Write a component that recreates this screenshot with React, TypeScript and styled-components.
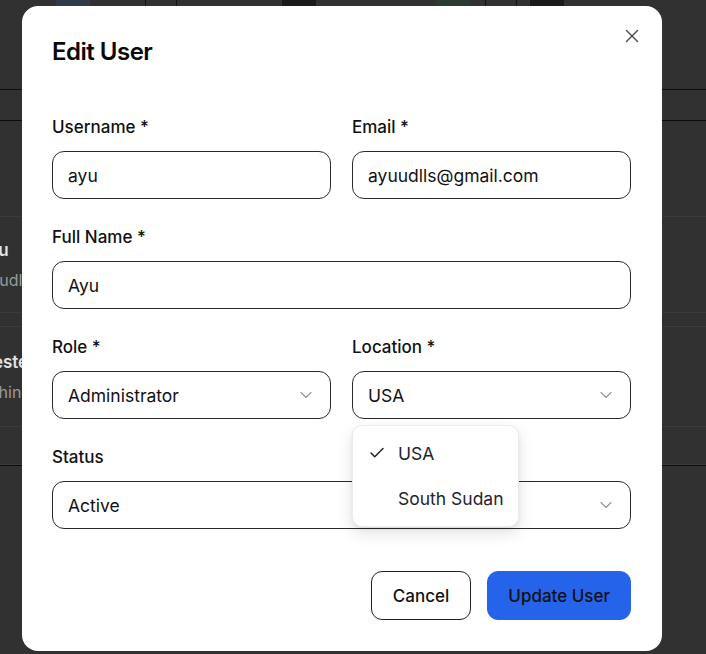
import React from "react";
import styled, { createGlobalStyle } from "styled-components";
import { X, ChevronDown, Check } from "lucide-react";

const GlobalStyle = createGlobalStyle`
  html, body { margin: 0; padding: 0; }
  body {
    background: #313131;
    font-family: Inter, "Noto Sans", sans-serif;
    overflow: hidden;
  }
  * { box-sizing: border-box; }
`;

/* ---------- background page (dimmed) ---------- */
const Page = styled.div`
  width: 706px;
  height: 654px;
  background: #313131;
  display: flex;
  flex-direction: column;
`;

const Toolbar = styled.div`
  height: 90px;
  display: flex;
  align-items: flex-start;
  border-bottom: 1px solid #0c0c0c;
`;

const ToolCell = styled.div<{ $w: number; $line?: boolean }>`
  width: ${(p) => p.$w}px;
  height: 8px;
  border-right: ${(p) => (p.$line ? "1px solid #141414" : "none")};
  display: flex;
  justify-content: center;
`;

const ToolChip = styled.div<{ $c: string }>`
  width: 34px;
  height: 8px;
  background: ${(p) => p.$c};
`;

const HeadRow = styled.div`
  height: 31px;
  border-bottom: 1px solid #0c0c0c;
`;

const BodyRow = styled.div<{ $h: number }>`
  height: ${(p) => p.$h}px;
  border-bottom: 1px solid #3b3b3b;
  display: flex;
  flex-direction: column;
  justify-content: center;
  gap: 10px;
`;

const EdgeCell = styled.div`
  width: 22px;
  overflow: hidden;
  display: flex;
  flex-direction: column;
  gap: 10px;
`;

const RowName = styled.div<{ $shift: number }>`
  color: #e2e2e2;
  font-size: 17px;
  font-weight: 600;
  line-height: 20px;
  margin-left: ${(p) => -p.$shift}px;
  white-space: nowrap;
`;

const RowSub = styled.div<{ $shift: number }>`
  color: #9a9a9a;
  font-size: 16px;
  line-height: 20px;
  margin-left: ${(p) => -p.$shift}px;
  white-space: nowrap;
`;

const TableEnd = styled.div`
  border-top: 1px solid #0c0c0c;
`;

/* ---------- modal ---------- */
const Modal = styled.div`
  position: fixed;
  left: 22px;
  top: 6px;
  width: 640px;
  height: 645px;
  background: #fff;
  border-radius: 16px;
  padding: 30px 31px 32px 30px;
  display: flex;
  flex-direction: column;
`;

const CloseButton = styled.button`
  position: absolute;
  top: 19px;
  right: 19px;
  width: 22px;
  height: 22px;
  padding: 0;
  border: none;
  background: none;
  color: #4a4a4a;
  display: flex;
  align-items: center;
  justify-content: center;
  cursor: pointer;
`;

const Title = styled.h2`
  margin: 0 0 47px;
  font-size: 24px;
  line-height: 32px;
  font-weight: 600;
  letter-spacing: -0.5px;
  color: #0a0a0a;
`;

const FormGrid = styled.div`
  display: grid;
  grid-template-columns: 1fr 1fr;
  column-gap: 21px;
  row-gap: 26px;
`;

const Field = styled.div<{ $span?: boolean }>`
  grid-column: ${(p) => (p.$span ? "1 / -1" : "auto")};
  display: flex;
  flex-direction: column;
  gap: 12px;
  position: relative;
`;

const Label = styled.label`
  font-size: 17px;
  line-height: 24px;
  font-weight: 500;
  color: #111;
`;

const Input = styled.div`
  height: 48px;
  border: 1px solid #2a2a2a;
  border-radius: 12px;
  padding: 0 15px;
  display: flex;
  align-items: center;
  font-size: 17.5px;
  color: #111;
`;

const Select = styled(Input)`
  justify-content: space-between;
  padding-right: 14px;
  svg {
    color: #969696;
  }
`;

const Menu = styled.div`
  position: absolute;
  left: 0;
  top: 90px;
  width: 167px;
  background: #fff;
  border: 1px solid #ececec;
  border-radius: 10px;
  box-shadow: 0 6px 16px rgba(0, 0, 0, 0.12), 0 2px 4px rgba(0, 0, 0, 0.06);
  padding: 5px 0;
  z-index: 5;
`;

const MenuItem = styled.div`
  height: 45px;
  display: flex;
  align-items: center;
  padding-left: 45px;
  position: relative;
  font-size: 17.5px;
  color: #1e2433;
  svg {
    position: absolute;
    left: 15px;
    top: 13px;
  }
`;

const Footer = styled.div`
  margin-top: 42px;
  display: flex;
  justify-content: flex-end;
  gap: 16px;
`;

const Button = styled.button<{ $primary?: boolean }>`
  height: 49px;
  padding: 0 ${(p) => (p.$primary ? "20px" : "21px")};
  border-radius: 11px;
  font-family: Inter, "Noto Sans", sans-serif;
  font-size: 17px;
  font-weight: 500;
  color: #111;
  background: ${(p) => (p.$primary ? "#2563eb" : "#fff")};
  border: 1px solid ${(p) => (p.$primary ? "#2563eb" : "#222")};
  cursor: pointer;
`;

export default function App() {
  return (
    <>
      <GlobalStyle />
      <Page>
        <Toolbar>
          <ToolCell $w={146} $line>
            <ToolChip $c="#2f3a4a" />
          </ToolCell>
          <ToolCell $w={31} $line />
          <ToolCell $w={243}>
            <ToolChip $c="#1a1a1a" />
          </ToolCell>
          <ToolCell $w={66} $line>
            <ToolChip $c="#2c3a2f" />
          </ToolCell>
          <ToolCell $w={31} $line />
          <ToolCell $w={60}>
            <ToolChip $c="#1a1a1a" />
          </ToolCell>
        </Toolbar>
        <HeadRow />
        <BodyRow $h={96} />
        <BodyRow $h={96}>
          <EdgeCell>
            <RowName $shift={23}>Ayu</RowName>
            <RowSub $shift={28}>ayuudlls@gmail.com</RowSub>
          </EdgeCell>
        </BodyRow>
        <BodyRow $h={14} />
        <BodyRow $h={100}>
          <EdgeCell>
            <RowName $shift={17}>Tester</RowName>
            <RowSub $shift={34}>Machine</RowSub>
          </EdgeCell>
        </BodyRow>
        <BodyRow $h={38} />
        <TableEnd />
      </Page>

      <Modal role="dialog" aria-label="Edit User">
        <CloseButton aria-label="Close">
          <X size={22} strokeWidth={1.5} />
        </CloseButton>
        <Title>Edit User</Title>
        <FormGrid>
          <Field>
            <Label>Username *</Label>
            <Input>ayu</Input>
          </Field>
          <Field>
            <Label>Email *</Label>
            <Input>ayuudlls@gmail.com</Input>
          </Field>
          <Field $span>
            <Label>Full Name *</Label>
            <Input>Ayu</Input>
          </Field>
          <Field>
            <Label>Role *</Label>
            <Select>
              Administrator
              <ChevronDown size={20} strokeWidth={1.4} />
            </Select>
          </Field>
          <Field>
            <Label>Location *</Label>
            <Select>
              USA
              <ChevronDown size={20} strokeWidth={1.4} />
            </Select>
            <Menu>
              <MenuItem>
                <Check size={18} strokeWidth={2} />
                USA
              </MenuItem>
              <MenuItem>South Sudan</MenuItem>
            </Menu>
          </Field>
          <Field $span>
            <Label>Status</Label>
            <Select>
              Active
              <ChevronDown size={20} strokeWidth={1.4} />
            </Select>
          </Field>
        </FormGrid>
        <Footer>
          <Button>Cancel</Button>
          <Button $primary>Update User</Button>
        </Footer>
      </Modal>
    </>
  );
}
